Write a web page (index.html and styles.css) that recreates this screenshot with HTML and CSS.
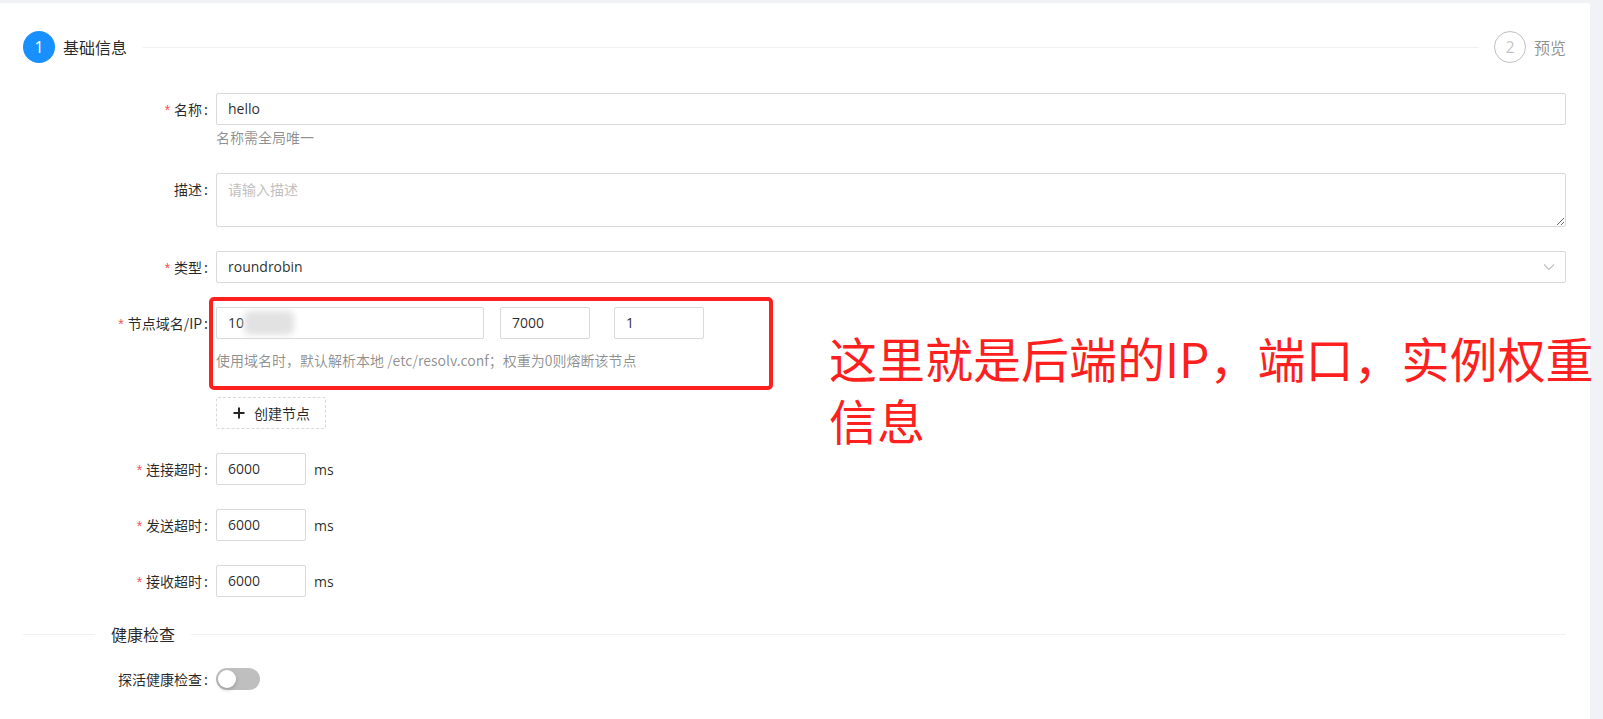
FILE: index.html
```html
<!DOCTYPE html>
<html lang="zh-CN">
<head>
<meta charset="utf-8">
<title>Upstream</title>
<link rel="stylesheet" href="styles.css">
</head>
<body>
<div class="card">
  <div class="steps">
    <div class="step step-active">
      <span class="step-icon">1</span>
      <span class="step-title">基础信息</span>
      <span class="step-tail"></span>
    </div>
    <div class="step step-wait">
      <span class="step-icon">2</span>
      <span class="step-title">预览</span>
    </div>
  </div>

  <div class="form">
    <div class="row">
      <label class="label req">名称<span class="colon">:</span></label>
      <div class="control">
        <div class="input">hello</div>
        <div class="help">名称需全局唯一</div>
      </div>
    </div>

    <div class="row">
      <label class="label">描述<span class="colon">:</span></label>
      <div class="control">
        <textarea class="textarea" placeholder="请输入描述"></textarea>
      </div>
    </div>

    <div class="row">
      <label class="label req">类型<span class="colon">:</span></label>
      <div class="control">
        <div class="input select">
          <span>roundrobin</span>
          <svg class="arrow" width="12" height="12" viewBox="0 0 12 12"><polyline points="1,3.5 6,8.5 11,3.5" fill="none" stroke="#bfbfbf" stroke-width="1.1"/></svg>
        </div>
      </div>
    </div>

    <div class="row row-node">
      <label class="label req">节点域名/IP<span class="colon">:</span></label>
      <div class="control">
        <div class="node-inputs">
          <div class="input w-host">10<span class="blur"></span></div>
          <div class="input w-port">7000</div>
          <div class="input w-weight">1</div>
        </div>
        <div class="help help-node">使用域名时，默认解析本地 /etc/resolv.conf；权重为0则熔断该节点</div>
      </div>
    </div>

    <div class="row">
      <div class="label"></div>
      <div class="control">
        <button class="btn-dashed">
          <svg width="14" height="14" viewBox="0 0 14 14"><path d="M7 1.5v11M1.5 7h11" stroke="rgba(0,0,0,0.85)" stroke-width="2" fill="none"/></svg>
          <span>创建节点</span>
        </button>
      </div>
    </div>

    <div class="row">
      <label class="label req">连接超时<span class="colon">:</span></label>
      <div class="control inline">
        <div class="input w-num">6000</div><span class="unit">ms</span>
      </div>
    </div>

    <div class="row">
      <label class="label req">发送超时<span class="colon">:</span></label>
      <div class="control inline">
        <div class="input w-num">6000</div><span class="unit">ms</span>
      </div>
    </div>

    <div class="row">
      <label class="label req">接收超时<span class="colon">:</span></label>
      <div class="control inline">
        <div class="input w-num">6000</div><span class="unit">ms</span>
      </div>
    </div>

    <div class="divider">
      <span class="divider-line divider-before"></span>
      <span class="divider-text">健康检查</span>
      <span class="divider-line divider-after"></span>
    </div>

    <div class="row">
      <label class="label">探活健康检查<span class="colon">:</span></label>
      <div class="control inline">
        <span class="switch"><span class="knob"></span></span>
      </div>
    </div>
  </div>
</div>

<div class="note-box"></div>
<div class="note-text">
  <div class="note-line">这里就是后端的IP，端口，实例权重</div>
  <div class="note-line">信息</div>
</div>
</body>
</html>
```

FILE: styles.css
```css
* { box-sizing: border-box; }

body {
  margin: 0;
  background: #f0f2f5;
  font-family: "Open Sans", "Noto Sans CJK SC", sans-serif;
  font-size: 14px;
  color: rgba(0, 0, 0, 0.85);
  position: relative;
  overflow: hidden;
  height: 719px;
}

.card {
  margin-top: 3px;
  width: 1590px;
  height: 716px;
  background: #fff;
  border-radius: 0 2px 0 0;
  padding: 28px 24px 0 23px;
}

/* steps */
.steps {
  display: flex;
  align-items: center;
  height: 32px;
}
.step {
  display: flex;
  align-items: center;
}
.step-active { flex: 1; }
.step-icon {
  width: 32px;
  height: 32px;
  border-radius: 50%;
  display: flex;
  align-items: center;
  justify-content: center;
  font-size: 16px;
  margin-right: 8px;
}
.step-active .step-icon {
  background: #1890ff;
  color: #fff;
}
.step-wait { margin-left: 15px; }
.step-wait .step-icon {
  border: 1px solid rgba(0, 0, 0, 0.25);
  color: rgba(0, 0, 0, 0.25);
}
.step-title {
  font-size: 16px;
  line-height: 32px;
  font-family: "Noto Sans CJK SC", sans-serif;
}
.step-active .step-title { padding-right: 16px; color: rgba(0,0,0,0.85); }
.step-wait .step-title { color: rgba(0, 0, 0, 0.45); }
.step-tail {
  flex: 1;
  height: 1px;
  background: #f0f0f0;
}

/* form */
.form { margin-top: 30px; }
.row {
  display: grid;
  grid-template-columns: 193px 1fr;
  margin-bottom: 24px;
}
.label {
  text-align: right;
  line-height: 32px;
  height: 32px;
  white-space: nowrap;
  font-family: "Noto Sans CJK SC", sans-serif;
}
.label.req::before {
  content: "*";
  color: #ff4d4f;
  margin-right: 4px;
  font-family: "Liberation Sans", sans-serif;
  font-size: 14px;
}
.colon { margin: 0 8px 0 2px; }

.control.inline {
  display: flex;
  align-items: center;
  height: 32px;
}

.input {
  height: 32px;
  border: 1px solid #d9d9d9;
  border-radius: 2px;
  padding: 0 11px;
  line-height: 30px;
  background: #fff;
  white-space: nowrap;
}
.help {
  line-height: 24px;
  height: 24px;
  color: rgba(0, 0, 0, 0.45);
  font-family: "Noto Sans CJK SC", sans-serif;
}

.textarea {
  display: block;
  width: 100%;
  height: 54px;
  border: 1px solid #d9d9d9;
  border-radius: 2px;
  padding: 4px 11px;
  font: inherit;
  line-height: 22px;
  color: rgba(0, 0, 0, 0.85);
  resize: vertical;
  outline: none;
}
.textarea::placeholder {
  color: #bfbfbf;
  font-family: "Noto Sans CJK SC", sans-serif;
}

.select {
  display: flex;
  align-items: center;
  justify-content: space-between;
}
.arrow { margin-right: -1px; }

.row-node { margin-bottom: 25px; }
.node-inputs {
  display: flex;
  margin-bottom: 9px;
}
.w-host { width: 268px; margin-right: 16px; }
.w-port { width: 90px; margin-right: 24px; }
.w-weight { width: 90px; }
.w-num { width: 90px; }
.blur {
  display: inline-block;
  width: 50px;
  height: 24px;
  vertical-align: middle;
  margin-top: -2px;
  background: #e2e2e2;
  filter: blur(3px);
  border-radius: 6px;
}

.btn-dashed {
  display: inline-flex;
  align-items: center;
  gap: 8px;
  height: 32px;
  padding: 0 15px;
  border: 1px dashed #d9d9d9;
  border-radius: 2px;
  background: #fff;
  font: inherit;
  font-family: "Noto Sans CJK SC", sans-serif;
  color: rgba(0, 0, 0, 0.85);
}

.unit { margin-left: 8px; }

/* divider */
.divider {
  display: flex;
  align-items: center;
  height: 26px;
  margin-bottom: 16px;
}
.divider-line {
  height: 1px;
  background: #f0f0f0;
}
.divider-before { width: 72px; }
.divider-after { flex: 1; }
.divider-text {
  padding: 0 16px;
  font-size: 16px;
  font-family: "Noto Sans CJK SC", sans-serif;
  line-height: 26px;
}

/* switch */
.switch {
  position: relative;
  display: inline-block;
  width: 44px;
  height: 22px;
  border-radius: 11px;
  background: rgba(0, 0, 0, 0.25);
}
.knob {
  position: absolute;
  left: 2px;
  top: 2px;
  width: 18px;
  height: 18px;
  border-radius: 50%;
  background: #fff;
  box-shadow: 0 2px 4px rgba(0, 35, 11, 0.2);
}

/* annotation overlay */
.note-box {
  position: absolute;
  left: 209px;
  top: 297px;
  width: 564px;
  height: 93px;
  border: 4px solid #fe1f1f;
  border-radius: 5px;
}
.note-text {
  position: absolute;
  left: 829px;
  top: 326px;
  font-family: "Noto Sans CJK SC", sans-serif;
  font-size: 48px;
  color: #fe1f1f;
  white-space: nowrap;
}
.note-line {
  height: 62px;
  line-height: 62px;
}
```
